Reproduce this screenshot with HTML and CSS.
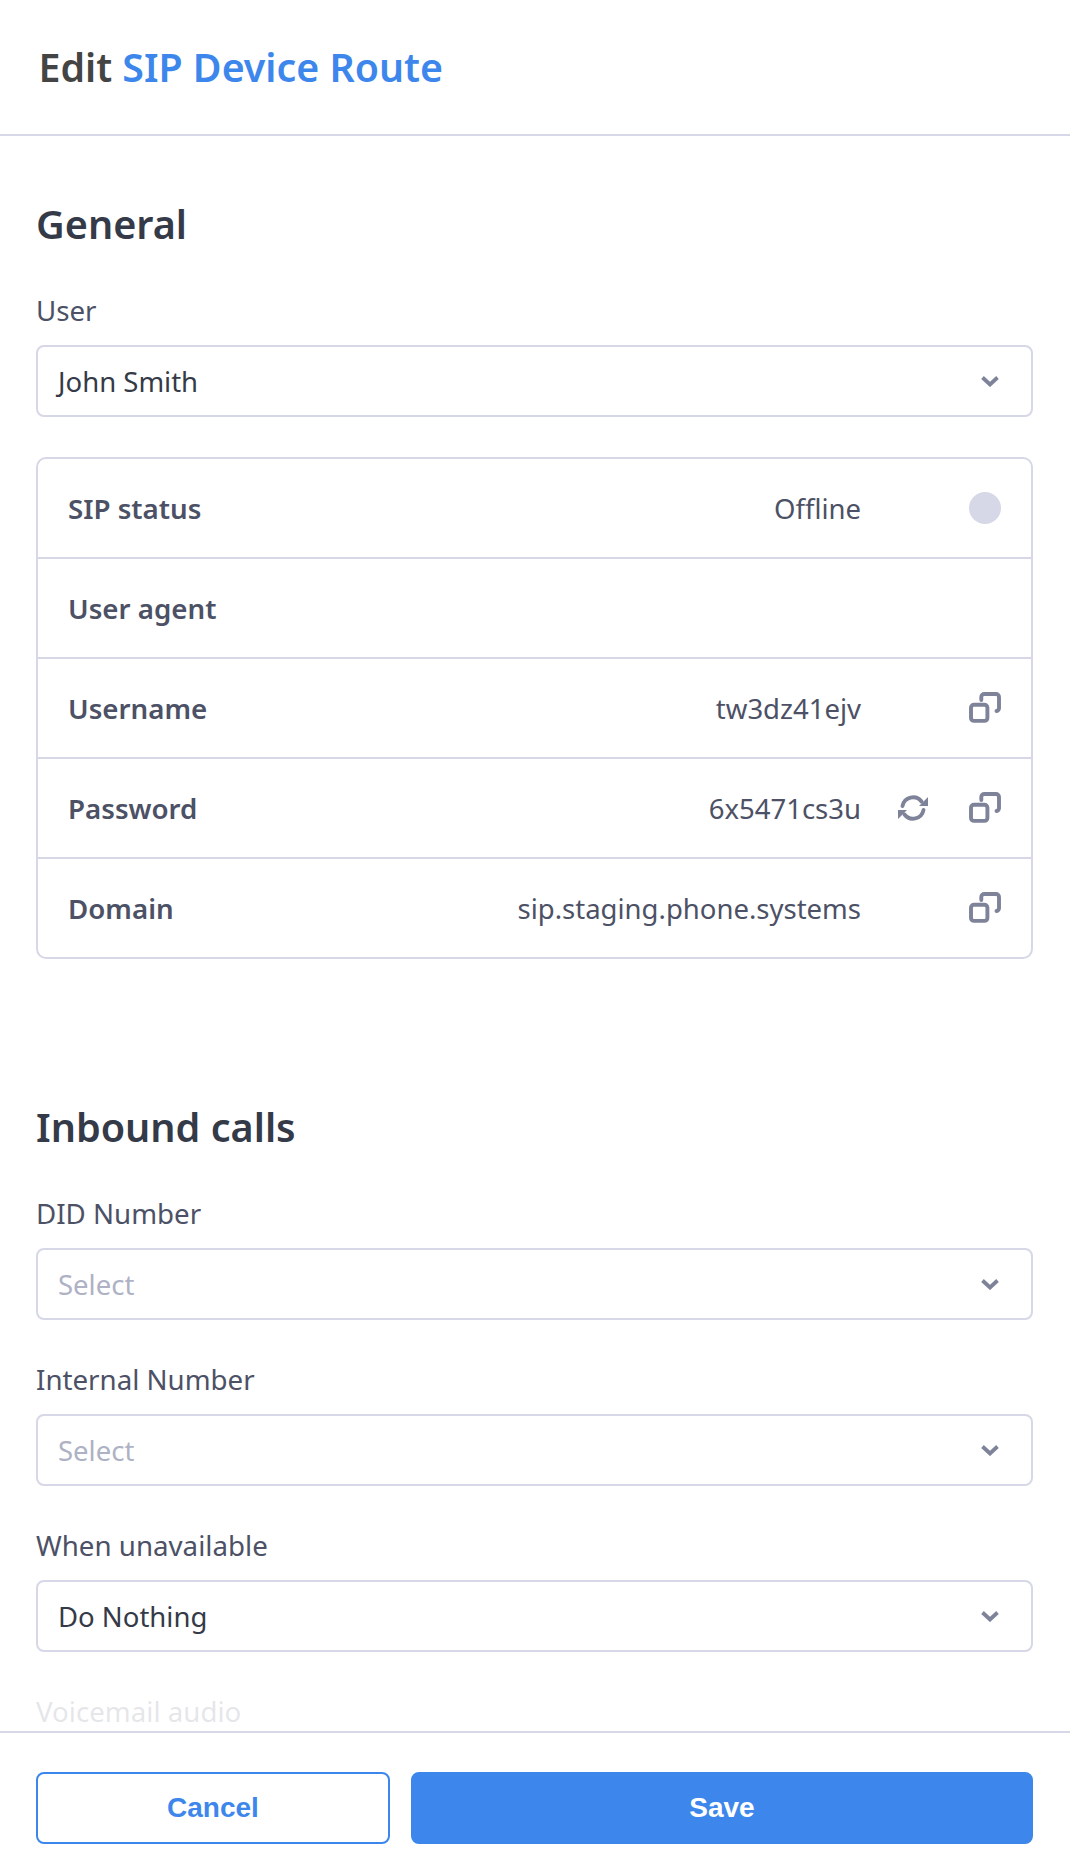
FILE: index.html
```html
<!DOCTYPE html>
<html lang="en">
<head>
<meta charset="utf-8">
<title>Edit SIP Device Route</title>
<link rel="stylesheet" href="styles.css">
</head>
<body>
<div class="page">
  <header class="top">
    <h1 class="title">Edit <span class="accent">SIP Device Route</span></h1>
  </header>
  <main class="content">
    <section class="general">
      <h2 class="section-title">General</h2>
      <div class="field">
        <label class="label">User</label>
        <div class="select"><span>John Smith</span>
          <svg class="chev" viewBox="0 0 20 12"><path d="M2.500 2.500 10 9.500 17.500 2.500"/></svg>
        </div>
      </div>
      <div class="info">
        <div class="row"><span class="key">SIP status</span><span class="val">Offline</span><span class="slot"></span><span class="slot"><span class="dot"></span></span></div>
        <div class="row"><span class="key">User agent</span></div>
        <div class="row"><span class="key">Username</span><span class="val">tw3dz41ejv</span><span class="slot"></span><span class="slot">
          <svg class="icon" viewBox="0 0 32 32"><rect x="2" y="12.700" width="16.400" height="16.200" rx="3"/><path d="M12.300 8V5A3 3 0 0 1 15.300 2H27A3 3 0 0 1 30 5V16.500A3 3 0 0 1 27.500 19"/></svg></span></div>
        <div class="row"><span class="key">Password</span><span class="val">6x5471cs3u</span><span class="slot">
          <svg class="icon refresh" viewBox="0 0 32 32"><path d="M5.500 14A10.700 10.700 0 0 1 24.500 9.500M26.500 18A10.700 10.700 0 0 1 7.500 22.500"/><path class="fill" d="M31 5V14H22ZM1 27V18H10Z"/></svg></span><span class="slot">
          <svg class="icon" viewBox="0 0 32 32"><rect x="2" y="12.700" width="16.400" height="16.200" rx="3"/><path d="M12.300 8V5A3 3 0 0 1 15.300 2H27A3 3 0 0 1 30 5V16.500A3 3 0 0 1 27.500 19"/></svg></span></div>
        <div class="row"><span class="key">Domain</span><span class="val">sip.staging.phone.systems</span><span class="slot"></span><span class="slot">
          <svg class="icon" viewBox="0 0 32 32"><rect x="2" y="12.700" width="16.400" height="16.200" rx="3"/><path d="M12.300 8V5A3 3 0 0 1 15.300 2H27A3 3 0 0 1 30 5V16.500A3 3 0 0 1 27.500 19"/></svg></span></div>
      </div>
    </section>
    <section class="inbound">
      <h2 class="section-title">Inbound calls</h2>
      <div class="field">
        <label class="label">DID Number</label>
        <div class="select placeholder"><span>Select</span>
          <svg class="chev" viewBox="0 0 20 12"><path d="M2.500 2.500 10 9.500 17.500 2.500"/></svg>
        </div>
      </div>
      <div class="field">
        <label class="label">Internal Number</label>
        <div class="select placeholder"><span>Select</span>
          <svg class="chev" viewBox="0 0 20 12"><path d="M2.500 2.500 10 9.500 17.500 2.500"/></svg>
        </div>
      </div>
      <div class="field">
        <label class="label">When unavailable</label>
        <div class="select"><span>Do Nothing</span>
          <svg class="chev" viewBox="0 0 20 12"><path d="M2.500 2.500 10 9.500 17.500 2.500"/></svg>
        </div>
      </div>
      <div class="field">
        <label class="label">Voicemail audio</label>
      </div>
    </section>
  </main>
  <footer class="bottom">
    <button class="btn cancel" type="button">Cancel</button>
    <button class="btn save" type="button">Save</button>
  </footer>
</div>
</body>
</html>
```

FILE: styles.css
```css
* { box-sizing: border-box; }
html, body { margin: 0; padding: 0; background: #fff; }
body { font-family: "Noto Sans", "Open Sans", sans-serif; color: #4c5166; }
.page { width: 1070px; height: 1876px; display: flex; flex-direction: column; overflow: hidden; }

.top { flex: none; height: 136px; padding-left: 38.500px; display: flex; align-items: center; border-bottom: 2px solid #d6d8e7; }
.title { margin: 1px 0 0; font-size: 39.300px; line-height: 1.2; font-weight: 600; color: #444; }
.accent { color: #3d87ec; }

.content { flex: 1; min-height: 0; overflow: hidden; padding: 0 37px 0 36px; position: relative; }
.content::after { content: ""; position: absolute; left: 0; right: 0; bottom: 0; height: 42px; background: rgba(255,255,255,0.86); }

.general { padding-top: 60px; }
.inbound { padding-top: 140px; }
.section-title { margin: 0 0 39px; font-size: 39.600px; line-height: 56px; font-weight: 600; color: #343a47; }
.field { margin-bottom: 40px; }
.label { display: block; font-size: 27.700px; line-height: 38px; margin-bottom: 16px; color: #4c5166; }
.select { height: 72px; padding: 0 31px 0 20px; display: flex; align-items: center; justify-content: space-between; border: 2px solid #d6d8e7; border-radius: 8px; font-size: 27.500px; color: #343a47; }
.placeholder { color: #aeb2c4; }
.chev { width: 20px; height: 12px; fill: none; stroke: #7f8399; stroke-width: 3.800; }

.info { border: 2px solid #d6d8e7; border-radius: 10px; }
.row { height: 100px; display: flex; align-items: center; padding: 0 30px; border-bottom: 2px solid #d6d8e7; font-size: 27.500px; }
.row:last-child { height: 98px; border-bottom: 0; }
.key { font-size: 27.700px; font-weight: 600; color: #4c5166; margin-right: auto; }
.val { color: #4c5166; }
.slot { width: 68px; display: flex; justify-content: flex-end; }
.slot:last-child { width: 72px; }
.dot { width: 32px; height: 32px; border-radius: 50%; background: #d6d8e7; }
.icon { width: 32px; height: 32px; fill: none; stroke: #7f8399; stroke-width: 3.900; stroke-linecap: round; }
.icon .fill { fill: #7f8399; stroke: none; }

.bottom { flex: none; height: 145px; padding: 39px 37px 0 36px; display: flex; gap: 21px; border-top: 2px solid #d6d8e7; background: #fff; }
.btn { height: 72px; border-radius: 8px; font-family: "Liberation Sans", Arial, sans-serif; font-weight: 700; font-size: 28px; cursor: pointer; }
.cancel { width: 354px; background: #fff; border: 2px solid #3d87ec; color: #3d87ec; }
.save { flex: 1; background: #3d87ec; border: 2px solid #3d87ec; color: #fff; }
```
